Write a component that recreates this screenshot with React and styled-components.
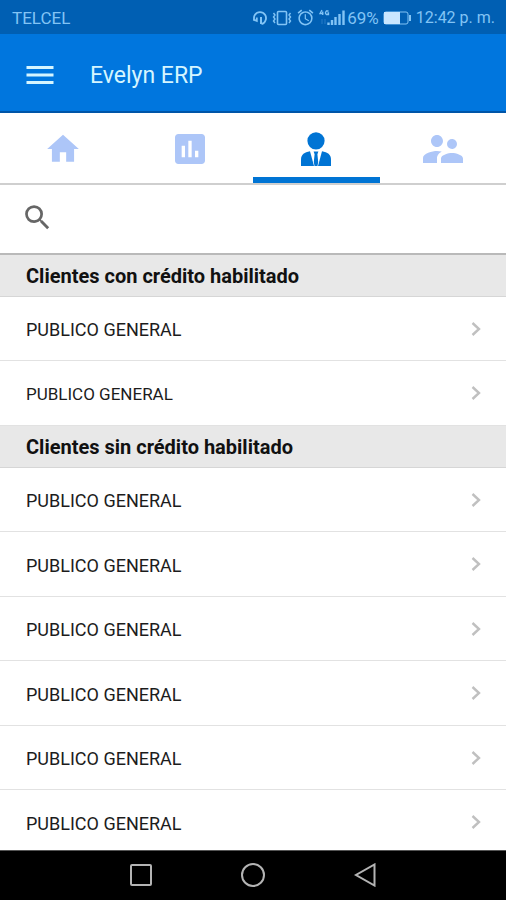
import React, { useState } from "react";
import {
  MdAlarm,
  MdHome,
  MdInsertChart,
  MdMenu,
  MdSearch,
  MdSupervisorAccount
} from "react-icons/md";
import styled, { createGlobalStyle } from "styled-components";

const sections = [
  {
    title: "Clientes con crédito habilitado",
    clients: [
      { id: 1, name: "PUBLICO GENERAL" },
      { id: 2, name: "PUBLICO GENERAL", small: true }
    ]
  },
  {
    title: "Clientes sin crédito habilitado",
    clients: [
      { id: 3, name: "PUBLICO GENERAL" },
      { id: 4, name: "PUBLICO GENERAL" },
      { id: 5, name: "PUBLICO GENERAL" },
      { id: 6, name: "PUBLICO GENERAL" },
      { id: 7, name: "PUBLICO GENERAL" },
      { id: 8, name: "PUBLICO GENERAL" }
    ]
  }
];

const tabs = [
  { id: "home", label: "Inicio", icon: <MdHome size={38} /> },
  { id: "reports", label: "Reportes", icon: <MdInsertChart size={40} /> },
  { id: "clients", label: "Clientes", icon: <ManIcon /> },
  { id: "users", label: "Usuarios", icon: <MdSupervisorAccount size={48} /> }
];

function ManIcon() {
  return (
    <svg width="30" height="34" viewBox="0 0 30 34" fill="currentColor">
      <circle cx="15" cy="8.8" r="8.6" />
      <path d="M0 34V27.500C0 22.500 3.500 20 9 19.200L13 34Z" />
      <path d="M30 34V27.500C30 22.500 26.500 20 21 19.200L17 34Z" />
      <path d="M12.600 19.400H17.400L16.400 22.300L17.200 30L16.500 34H13.500L12.800 30L13.600 22.300Z" />
    </svg>
  );
}

function HeadsetIcon() {
  return (
    <svg width="16" height="16" viewBox="0 0 16 16" fill="none" stroke="currentColor">
      <path d="M2.500 10.500A6 6 0 1 1 13.500 10.500Q12.500 13.500 9.500 14.200" strokeWidth="1.800" />
      <path d="M1.200 9.500L4.800 11V7.500" strokeWidth="1.800" />
      <path d="M9 7V14" strokeWidth="2" />
    </svg>
  );
}

function VibrationIcon() {
  return (
    <svg width="20" height="16" viewBox="0 0 20 16" fill="none" stroke="currentColor">
      <rect x="5.500" y="1.500" width="9" height="13" rx="1" strokeWidth="1.600" />
      <path d="M1.500 3L3 5L1.500 7L3 9L1.500 11L3 13M18.500 3L17 5L18.500 7L17 9L18.500 11L17 13" strokeWidth="1.400" />
    </svg>
  );
}

function SignalIcon() {
  return (
    <svg width="26" height="18" viewBox="0 0 26 18" fill="none" stroke="currentColor">
      <path d="M3 1L1 4.500H4.500M3.700 2.500V6M9.500 2H7.500L6.500 3.500V4.500L7.500 5.500H9.500V4H8.500" strokeWidth="1.300" />
      <path d="M3 10V15M6 10V15" opacity="0.3" />
      <path d="M9.500 13.500V16M13 11V16M16.500 8V16M20.500 5V16M24.500 1.500V16" strokeWidth="2.400" />
    </svg>
  );
}

function BatteryIcon() {
  return (
    <svg width="29" height="14" viewBox="0 0 29 14">
      <rect x="1" y="1" width="24" height="12" rx="2" fill="none" stroke="currentColor" />
      <rect x="1" y="1" width="16" height="12" fill="#c9e6ff" />
      <rect x="26" y="4" width="2" height="6" fill="currentColor" />
    </svg>
  );
}

function ChevronIcon() {
  return (
    <svg width="10" height="16" viewBox="0 0 10 16" fill="none" stroke="#c0c0c0">
      <path d="M1.500 2L8 8L1.500 14" strokeWidth="2.400" />
    </svg>
  );
}

function App() {
  const [activeTab, setActiveTab] = useState("clients");
  const [search, setSearch] = useState("");

  return (
    <>
      <GlobalStyle />
      <Screen>
        <StatusBar>
          <span>TELCEL</span>
          <StatusIcons>
            <HeadsetIcon />
            <VibrationIcon />
            <MdAlarm size={19} />
            <Reception>
              <SignalIcon />
              <span>69%</span>
            </Reception>
            <BatteryIcon />
            <Clock>12:42 p. m.</Clock>
          </StatusIcons>
        </StatusBar>

        <Header>
          <MenuButton type="button" aria-label="Menú">
            <MdMenu size={36} />
          </MenuButton>
          <Title>Evelyn ERP</Title>
        </Header>

        <Tabs>
          {tabs.map(tab => (
            <Tab
              key={tab.id}
              type="button"
              aria-label={tab.label}
              $active={tab.id === activeTab}
              onClick={() => setActiveTab(tab.id)}
            >
              {tab.icon}
            </Tab>
          ))}
        </Tabs>

        <SearchBar>
          <SearchLabel htmlFor="search" aria-label="Buscar">
            <MdSearch size={33} />
          </SearchLabel>
          <SearchInput
            id="search"
            type="text"
            value={search}
            onChange={event => setSearch(event.target.value)}
          />
        </SearchBar>

        <Content>
          {sections.map(section => (
            <section key={section.title}>
              <SectionTitle>{section.title}</SectionTitle>
              <List>
                {section.clients.map(client => (
                  <Item key={client.id}>
                    <ClientLink href={`#cliente-${client.id}`}>
                      <Name $small={client.small}>{client.name}</Name>
                      <ChevronIcon />
                    </ClientLink>
                  </Item>
                ))}
              </List>
            </section>
          ))}
        </Content>

        <NavBar>
          <NavButton type="button" aria-label="Recientes">
            <svg width="24" height="24" viewBox="0 0 24 24">
              <rect x="2" y="2" width="20" height="20" rx="1" />
            </svg>
          </NavButton>
          <NavButton type="button" aria-label="Inicio">
            <svg width="24" height="24" viewBox="0 0 24 24">
              <circle cx="12" cy="12" r="11" />
            </svg>
          </NavButton>
          <NavButton type="button" aria-label="Atrás">
            <svg width="24" height="24" viewBox="0 0 24 24">
              <path d="M21.500 1.500V22.500L3 12Z" />
            </svg>
          </NavButton>
        </NavBar>
      </Screen>
    </>
  );
}

export default App;

const GlobalStyle = createGlobalStyle`
  * {
    box-sizing: border-box;
  }
  body {
    margin: 0;
    background: #fff;
    font-family: Roboto, "Liberation Sans", sans-serif;
  }
  button {
    padding: 0;
    border: 0;
    background: none;
    cursor: pointer;
  }
  svg {
    display: block;
    flex-shrink: 0;
  }
`;
const Screen = styled.div`
  display: flex;
  flex-direction: column;
  height: 100vh;
`;
const StatusBar = styled.div`
  display: flex;
  align-items: center;
  justify-content: space-between;
  flex-shrink: 0;
  height: 34px;
  padding: 1px 11px 0 12px;
  background: #005fb3;
  color: #82c4f5;
  font-size: 17px;
`;
const StatusIcons = styled.div`
  display: flex;
  align-items: center;
  gap: 4px;
`;
const Reception = styled.div`
  display: flex;
  align-items: center;
  gap: 2px;
`;
const Clock = styled.span`
  font-size: 16px;
`;
const Header = styled.header`
  display: flex;
  align-items: center;
  gap: 32px;
  flex-shrink: 0;
  height: 79px;
  padding: 4px 22px 0;
  border-bottom: 2px solid #0055a8;
  background: #0076de;
  color: #d5f5ff;
`;
const MenuButton = styled.button`
  color: inherit;
`;
const Title = styled.h1`
  margin: 0;
  padding-top: 2px;
  font-size: 23px;
  font-weight: 400;
`;
const Tabs = styled.nav`
  display: flex;
  flex-shrink: 0;
  height: 72px;
  border-bottom: 2px solid #cfcfcf;
`;
const Tab = styled.button`
  display: flex;
  flex: 1;
  align-items: center;
  justify-content: center;
  padding-top: 2px;
  color: ${props => (props.$active ? "#0074d4" : "#adc6f8")};
  box-shadow: ${props => (props.$active ? "inset 0 -6px #0074d4" : "none")};
`;
const SearchBar = styled.div`
  display: flex;
  align-items: center;
  flex-shrink: 0;
  height: 70px;
  padding: 0 21px 4px;
  border-bottom: 2px solid #b9b9b9;
`;
const SearchLabel = styled.label`
  color: #666;
`;
const SearchInput = styled.input`
  flex: 1;
  min-width: 0;
  padding: 8px;
  border: 0;
  outline: 0;
  background: none;
  color: #222;
  font: inherit;
  font-size: 18px;
`;
const Content = styled.main`
  flex: 1;
  min-height: 0;
  overflow: hidden;
`;
const SectionTitle = styled.h2`
  display: flex;
  align-items: center;
  height: 42px;
  margin: 0;
  padding: 0 26px;
  border-bottom: 1px solid #d6d6d6;
  background: #e8e8e8;
  color: #111;
  font-size: 20px;
  font-weight: 700;
`;
const List = styled.ul`
  margin: 0;
  padding: 0;
  list-style: none;
`;
const Item = styled.li`
  height: 64px;
  border-bottom: 1px solid #e2e2e2;

  &:nth-child(even) {
    height: 65px;
  }
`;
const ClientLink = styled.a`
  display: flex;
  align-items: center;
  justify-content: space-between;
  height: 100%;
  padding: 0 25px 0 26px;
  color: #1c1c1c;
  text-decoration: none;
`;
const Name = styled.span`
  padding-top: 2px;
  font-size: ${props => (props.$small ? "17px" : "18px")};
`;
const NavBar = styled.footer`
  display: flex;
  align-items: center;
  justify-content: center;
  gap: 88px;
  flex-shrink: 0;
  height: 50px;
  padding-bottom: 2px;
  border-top: 1px solid #555;
  background: #000;
`;
const NavButton = styled.button`
  svg {
    fill: none;
    stroke: #b4b4b4;
    stroke-width: 2;
  }
`;
